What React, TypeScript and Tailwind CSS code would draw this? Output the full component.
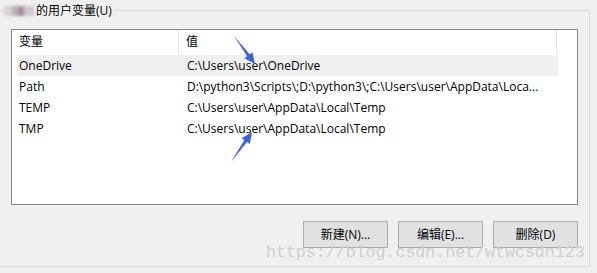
const rows = [
  { name: 'OneDrive', value: 'C:\\Users\\user\\OneDrive', selected: true },
  { name: 'Path', value: 'D:\\python3\\Scripts\\;D:\\python3\\;C:\\Users\\user\\AppData\\Loca...' },
  { name: 'TEMP', value: 'C:\\Users\\user\\AppData\\Local\\Temp' },
  { name: 'TMP', value: 'C:\\Users\\user\\AppData\\Local\\Temp' },
];

const buttons = ['新建(N)...', '编辑(E)...', '删除(D)'];

const font = "font-['Open_Sans','Noto_Sans_CJK_SC',sans-serif]";

const Arrow = ({ x1, y1, x2, y2 }: { x1: number; y1: number; x2: number; y2: number }) => {
  const dx = x2 - x1;
  const dy = y2 - y1;
  const len = Math.hypot(dx, dy);
  const ux = dx / len;
  const uy = dy / len;
  const px = -uy;
  const py = ux;
  const hb = 11;
  const bx = x2 - ux * hb;
  const by = y2 - uy * hb;
  const pts = [
    [x1, y1],
    [bx + px * 1.6, by + py * 1.6],
    [bx + px * 5, by + py * 5],
    [x2, y2],
    [bx - px * 5, by - py * 5],
    [bx - px * 1.6, by - py * 1.6],
  ]
    .map((p) => p.join(','))
    .join(' ');
  return <polygon points={pts} fill="#3b63d6" />;
};

export default function App() {
  return (
    <div className={`relative w-[597px] h-[273px] overflow-hidden bg-[#f0f0f0] ${font} text-[12px] text-black`}>
      <div className="relative ml-[-2px] mt-[10px] w-[592px] h-[257px] border border-[#dcdcdc] pl-[12px] pt-[18px]">
        <div className="absolute left-[5px] top-[-8px] flex items-center gap-[2px] bg-[#f0f0f0] pr-[2px] h-[16px]">
          <div className="flex h-[10px] w-[30px] blur-[1.5px]">
            <div className="w-[8px] bg-[#d6d2d6]" />
            <div className="w-[6px] bg-[#b9b0b9]" />
            <div className="w-[6px] bg-[#a78e9c]" />
            <div className="w-[10px] bg-[#cfc8d0]" />
          </div>
          <span className="leading-[16px]">的用户变量(U)</span>
        </div>

        <div className="w-[567px] h-[176px] border border-[#828790] bg-white">
          <div className="ml-[5px] flex h-[24px] items-center">
            <div className="w-[162px] pl-[2px] h-full flex items-center border-r border-[#e5e5e5]">变量</div>
            <div className="w-[378px] pl-[7px] h-full flex items-center border-r border-[#e5e5e5]">值</div>
          </div>
          <div className="mt-[1px]">
            {rows.map((r) => (
              <div
                key={r.name}
                className={`ml-[5px] flex h-[21px] w-[541px] items-center ${r.selected ? 'bg-[#f0f0f0]' : ''}`}
              >
                <div className="w-[163px] pl-[2px] whitespace-nowrap">{r.name}</div>
                <div className="pl-[7px] whitespace-nowrap">{r.value}</div>
              </div>
            ))}
          </div>
        </div>

        <div className="mt-[16px] flex w-[567px] justify-end gap-[10px]">
          {buttons.map((b) => (
            <button
              key={b}
              className="w-[85px] h-[27px] border border-[#adadad] bg-[#e1e1e1] text-[12px] leading-none"
            >
              {b}
            </button>
          ))}
        </div>
      </div>

      <div className="absolute left-[266px] top-[241px] font-['Liberation_Mono',monospace] text-[16.6px] text-[#cfcfcf] leading-[24px] whitespace-nowrap">
        https://blog.csdn.net/wtwcsdn123
      </div>

      <svg className="absolute left-0 top-0" width="597" height="273">
        <Arrow x1={234} y1={36} x2={255} y2={64} />
        <Arrow x1={231} y1={162} x2={252} y2={132} />
      </svg>
    </div>
  );
}
